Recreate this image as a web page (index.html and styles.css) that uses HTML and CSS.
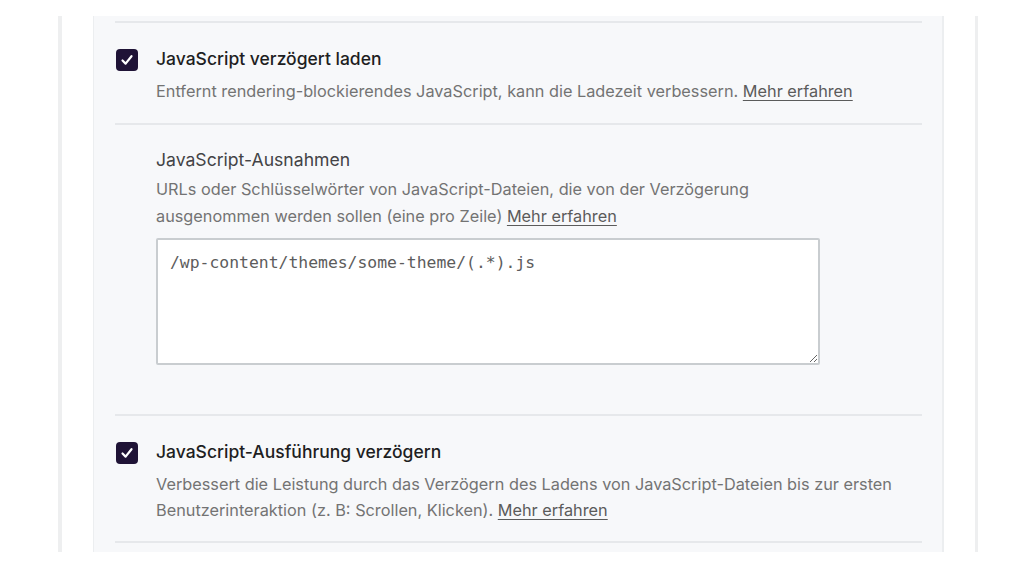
FILE: index.html
```html
<!DOCTYPE html>
<html lang="de">
<head>
<meta charset="utf-8">
<link rel="stylesheet" href="styles.css">
</head>
<body>
<div class="page">
  <div class="panel">
    <div class="top-rule"></div>
    <section class="option">
      <span class="check"><svg viewBox="0 0 22 22" width="22" height="22"><path d="M6.5 11.5 L9.6 14.6 L15.5 7.2" fill="none" stroke="#fff" stroke-width="2.2" stroke-linecap="round" stroke-linejoin="round"/></svg></span>
      <div class="option-body">
        <h3 class="title">JavaScript verzögert laden</h3>
        <p class="desc">Entfernt rendering-blockierendes JavaScript, kann die Ladezeit verbessern. <a href="#">Mehr erfahren</a></p>
      </div>
    </section>
    <section class="sub">
      <h4 class="sub-title">JavaScript-Ausnahmen</h4>
      <p class="desc">URLs oder Schlüsselwörter von JavaScript-Dateien, die von der Verzögerung<br>ausgenommen werden sollen (eine pro Zeile) <a href="#">Mehr erfahren</a></p>
      <textarea class="field">/wp-content/themes/some-theme/(.*).js</textarea>
    </section>
    <section class="option second">
      <span class="check"><svg viewBox="0 0 22 22" width="22" height="22"><path d="M6.5 11.5 L9.6 14.6 L15.5 7.2" fill="none" stroke="#fff" stroke-width="2.2" stroke-linecap="round" stroke-linejoin="round"/></svg></span>
      <div class="option-body">
        <h3 class="title">JavaScript-Ausführung verzögern</h3>
        <p class="desc">Verbessert die Leistung durch das Verzögern des Ladens von JavaScript-Dateien bis zur ersten<br>Benutzerinteraktion (z. B: Scrollen, Klicken). <a href="#">Mehr erfahren</a></p>
      </div>
    </section>
  </div>
</div>
</body>
</html>
```

FILE: styles.css
```css
* { box-sizing: border-box; }
html, body { margin: 0; padding: 0; background: #fff; }
body {
  font-family: Inter, "Noto Sans", "Liberation Sans", sans-serif;
  width: 1024px;
  height: 576px;
  overflow: hidden;
}
.page {
  margin: 16px 0 0 58px;
  width: 920px;
  height: 536px;
  border-left: 4px solid #eeeff0;
  border-right: 3px solid #eeeff0;
  padding-left: 31px;
  overflow: hidden;
}
.panel {
  width: 851px;
  height: 100%;
  background: #f7f8fa;
  border-left: 1px solid #eceef0;
  border-right: 2px solid #eceef0;
  padding: 0 20px 0 21px;
}
.top-rule {
  height: 7px;
  border-bottom: 2px solid #e6e8eb;
}
.option {
  display: flex;
  gap: 18px;
  padding: 26px 0 0 1px;
  height: 102px;
  border-bottom: 2px solid #e6e8eb;
}
.option.second {
  padding-top: 26px;
  height: 127px;
}
.option.second .desc { line-height: 26px; margin-top: 9px; }
.check {
  flex: none;
  width: 22px;
  height: 22px;
  border-radius: 4px;
  background: #1f1336;
  display: flex;
}
.title {
  margin: 0;
  font-size: 17.5px;
  font-weight: 500;
  line-height: 20px;
  color: #1e1e22;
}
.desc {
  margin: 9px 0 0;
  font-size: 16.3px;
  line-height: 26.5px;
  color: #737373;
}
.desc a {
  color: #5b5b5b;
  text-decoration: underline;
  text-underline-offset: 3px;
  text-decoration-thickness: 1px;
}
.sub {
  padding: 25px 0 0 41px;
  height: 291px;
  border-bottom: 2px solid #e6e8eb;
}
.sub-title {
  margin: 0;
  font-size: 17.6px;
  font-weight: 400;
  line-height: 20px;
  color: #434346;
}
.sub .desc { margin-top: 6px; line-height: 27px; }
.field {
  display: block;
  margin-top: 8px;
  width: 664px;
  height: 127px;
  border: 2px solid #c9cdd0;
  border-radius: 2px;
  background: #fff;
  padding: 12px 12px;
  font-family: "DejaVu Sans Mono", "Liberation Mono", monospace;
  font-size: 16.4px;
  line-height: 22px;
  color: #5c5c5c;
  resize: vertical;
}
```
